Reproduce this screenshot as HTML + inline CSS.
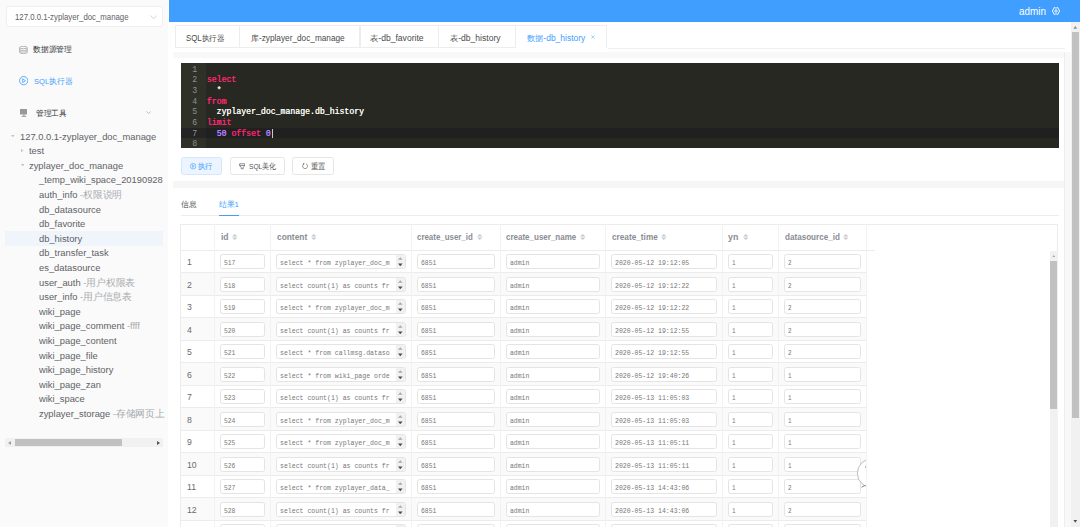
<!DOCTYPE html>
<html><head><meta charset="utf-8">
<style>
*{box-sizing:border-box;margin:0;padding:0}
html,body{width:1080px;height:527px;overflow:hidden;background:#fff;font-family:"Liberation Sans",sans-serif;color:#606266}
.a{position:absolute}
.t{position:absolute;white-space:pre;line-height:1;transform-origin:0 0}
</style></head><body>
<div class="a" style="left:0;top:0;width:168px;height:527px;background:#fafafa"></div>
<div class="a" style="left:5.8px;top:6px;width:156.8px;height:21px;background:#fff;border:1px solid #efefef;border-radius:3px"></div>
<div class="t" id="x0" style="transform:scaleX(0.9167);left:15.30px;top:12.72px;font-size:8.5px;color:#606266;">127.0.0.1-zyplayer_doc_manage</div>
<svg class="a" style="left:149.6px;top:14.6px" width="7.4" height="4.6" viewBox="0 0 8 5"><path d="M0.5 0.5 L4 4 L7.5 0.5" fill="none" stroke="#c0c4cc" stroke-width="0.8"/></svg>
<svg class="a" style="left:19.2px;top:45.8px" width="8.8" height="8.2" viewBox="0 0 9 8.4"><g fill="none" stroke="#a8a8a8" stroke-width="0.85"><ellipse cx="4.5" cy="1.6" rx="3.9" ry="1.2"/><path d="M0.6 1.6 V6.6 C0.6 8.2 8.4 8.2 8.4 6.6 V1.6"/><path d="M0.6 3.4 C0.6 5 8.4 5 8.4 3.4"/><path d="M0.6 5 C0.6 6.6 8.4 6.6 8.4 5"/></g></svg>
<div class="t" id="x1" style="transform:scaleX(0.9725);left:33.20px;top:46.21px;font-size:7.8px;color:#303133;">数据源管理</div>
<svg class="a" style="left:19px;top:76.3px" width="9.4" height="9.4" viewBox="0 0 10 10"><circle cx="5" cy="5" r="4.4" fill="none" stroke="#409eff" stroke-width="0.9"/><path d="M3.9 3 L6.9 5 L3.9 7 Z" fill="none" stroke="#409eff" stroke-width="0.85"/></svg>
<div class="t" id="x2" style="transform:scaleX(0.9695);left:33.60px;top:77.61px;font-size:7.8px;color:#409eff;">SQL执行器</div>
<svg class="a" style="left:19.6px;top:109.3px" width="7.8" height="7.8" viewBox="0 0 8 8"><rect x="0" y="0" width="8" height="5.6" fill="#999"/><rect x="3.2" y="5.6" width="1.6" height="1.4" fill="#999"/><rect x="1.6" y="7" width="4.8" height="1" fill="#999"/></svg>
<div class="t" id="x3" style="transform:scaleX(0.9625);left:36.00px;top:109.71px;font-size:7.8px;color:#303133;">管理工具</div>
<svg class="a" style="left:146px;top:110.6px" width="5.4" height="3.4" viewBox="0 0 6 4"><path d="M0.4 0.4 L3 3 L5.6 0.4" fill="none" stroke="#a0a0a0" stroke-width="0.8"/></svg>
<svg class="a" style="left:11.10px;top:134.50px" width="3.6" height="2.4" viewBox="0 0 3.6 2.4"><path d="M0 0 H3.6 L1.8 2.4 Z" fill="#c0c4cc"/></svg>
<div class="t" id="x4" style="transform:scaleX(0.9750);left:19.60px;top:131.59px;font-size:9.6px;color:#606266;">127.0.0.1-zyplayer_doc_manage</div>
<svg class="a" style="left:21.40px;top:148.80px" width="2.6" height="3.2" viewBox="0 0 2.6 3.2"><path d="M0 0 V3.2 L2.6 1.6 Z" fill="#c0c4cc"/></svg>
<div class="t" id="x5" style="transform:scaleX(0.9750);left:29.40px;top:146.19px;font-size:9.6px;color:#606266;">test</div>
<svg class="a" style="left:20.90px;top:163.70px" width="3.6" height="2.4" viewBox="0 0 3.6 2.4"><path d="M0 0 H3.6 L1.8 2.4 Z" fill="#c0c4cc"/></svg>
<div class="t" id="x6" style="transform:scaleX(0.9750);left:29.40px;top:160.79px;font-size:9.6px;color:#606266;">zyplayer_doc_manage</div>
<div class="t" id="x7" style="transform:scaleX(0.9750);left:39.20px;top:175.39px;font-size:9.6px;color:#606266;">_temp_wiki_space_20190928</div>
<div class="t" id="x8" style="transform:scaleX(0.9750);left:39.20px;top:189.99px;font-size:9.6px;color:#606266;">auth_info<span style="color:#a8aaae;font-size:9.6px"> -权限说明</span></div>
<div class="t" id="x9" style="transform:scaleX(0.9750);left:39.20px;top:204.59px;font-size:9.6px;color:#606266;">db_datasource</div>
<div class="t" id="x10" style="transform:scaleX(0.9750);left:39.20px;top:219.19px;font-size:9.6px;color:#606266;">db_favorite</div>
<div class="a" style="left:5.3px;top:231.40px;width:157.7px;height:15px;background:#f0f5fc"></div>
<div class="t" id="x11" style="transform:scaleX(0.9750);left:39.20px;top:233.79px;font-size:9.6px;color:#606266;">db_history</div>
<div class="t" id="x12" style="transform:scaleX(0.9750);left:39.20px;top:248.39px;font-size:9.6px;color:#606266;">db_transfer_task</div>
<div class="t" id="x13" style="transform:scaleX(0.9750);left:39.20px;top:262.99px;font-size:9.6px;color:#606266;">es_datasource</div>
<div class="t" id="x14" style="transform:scaleX(0.9750);left:39.20px;top:277.59px;font-size:9.6px;color:#606266;">user_auth<span style="color:#a8aaae;font-size:9.6px"> -用户权限表</span></div>
<div class="t" id="x15" style="transform:scaleX(0.9750);left:39.20px;top:292.19px;font-size:9.6px;color:#606266;">user_info<span style="color:#a8aaae;font-size:9.6px"> -用户信息表</span></div>
<div class="t" id="x16" style="transform:scaleX(0.9750);left:39.20px;top:306.79px;font-size:9.6px;color:#606266;">wiki_page</div>
<div class="t" id="x17" style="transform:scaleX(0.9750);left:39.20px;top:321.39px;font-size:9.6px;color:#606266;">wiki_page_comment<span style="color:#a8aaae;font-size:9.6px"> -ffff</span></div>
<div class="t" id="x18" style="transform:scaleX(0.9750);left:39.20px;top:335.99px;font-size:9.6px;color:#606266;">wiki_page_content</div>
<div class="t" id="x19" style="transform:scaleX(0.9750);left:39.20px;top:350.59px;font-size:9.6px;color:#606266;">wiki_page_file</div>
<div class="t" id="x20" style="transform:scaleX(0.9750);left:39.20px;top:365.19px;font-size:9.6px;color:#606266;">wiki_page_history</div>
<div class="t" id="x21" style="transform:scaleX(0.9750);left:39.20px;top:379.79px;font-size:9.6px;color:#606266;">wiki_page_zan</div>
<div class="t" id="x22" style="transform:scaleX(0.9750);left:39.20px;top:394.39px;font-size:9.6px;color:#606266;">wiki_space</div>
<div class="t" id="x23" style="transform:scaleX(0.9750);left:39.20px;top:408.99px;font-size:9.6px;color:#606266;">zyplayer_storage<span style="color:#a8aaae;font-size:9.6px"> -存储网页上</span></div>
<div class="a" style="left:5.3px;top:438.2px;width:157.7px;height:8.7px;background:#f1f1f1"></div>
<div class="a" style="left:14.8px;top:439.3px;width:107.5px;height:6.6px;background:#c1c1c1"></div>
<svg class="a" style="left:8px;top:440.6px" width="3" height="4" viewBox="0 0 3 4"><path d="M3 0 V4 L0 2 Z" fill="#a3a3a3"/></svg>
<svg class="a" style="left:157.4px;top:440.6px" width="3" height="4" viewBox="0 0 3 4"><path d="M0 0 V4 L3 2 Z" fill="#505050"/></svg>
<div class="a" style="left:168.8px;top:0;width:912px;height:22.2px;background:#409eff"></div>
<div class="t" id="x24" style="transform:scaleX(0.9356);left:1018.90px;top:5.84px;font-size:10.6px;color:#fff;">admin</div>
<svg class="a" style="left:1052px;top:6.8px" width="8" height="8" viewBox="0 0 8 8"><path d="M6.55 2.53 L6.92 3.12 L7.62 3.23 L7.62 4.77 L6.92 4.88 L6.55 5.47 L6.22 6.09 L6.48 6.75 L5.14 7.52 L4.70 6.97 L4.00 6.95 L3.30 6.97 L2.86 7.52 L1.52 6.75 L1.78 6.09 L1.45 5.47 L1.08 4.88 L0.38 4.77 L0.38 3.23 L1.08 3.12 L1.45 2.53 L1.78 1.91 L1.52 1.25 L2.86 0.48 L3.30 1.03 L4.00 1.05 L4.70 1.03 L5.14 0.48 L6.48 1.25 L6.22 1.91 Z" fill="none" stroke="#fff" stroke-width="1" stroke-linejoin="round"/><circle cx="4" cy="4" r="1.2" fill="none" stroke="#fff" stroke-width="0.9"/></svg>
<div class="a" style="left:173px;top:52.2px;width:892px;height:6px;background:#f8f8f8"></div>
<div class="a" style="left:173px;top:180.8px;width:892px;height:7px;background:#f6f6f6"></div>
<div class="a" style="left:1064px;top:52.2px;width:6.5px;height:475px;background:#f8f8f8"></div>
<div class="a" style="left:1064px;top:52.2px;width:1px;height:475px;background:#eeeeee"></div>
<div class="a" style="left:174.5px;top:25.3px;width:65.80px;height:23.2px;border:1px solid #ededed;background:#fff"></div>
<div class="t" id="x25" style="transform:scaleX(0.9431);left:186.40px;top:33.69px;font-size:8.3px;color:#4a4a4a;">SQL执行器</div>
<div class="a" style="left:239.3px;top:25.3px;width:121.20px;height:23.2px;border:1px solid #ededed;background:#fff"></div>
<div class="t" id="x26" style="transform:scaleX(0.9942);left:250.70px;top:33.69px;font-size:8.3px;color:#4a4a4a;">库-zyplayer_doc_manage</div>
<div class="a" style="left:359.5px;top:25.3px;width:79.70px;height:23.2px;border:1px solid #ededed;background:#fff"></div>
<div class="t" id="x27" style="transform:scaleX(1.0342);left:370.40px;top:33.69px;font-size:8.3px;color:#4a4a4a;">表-db_favorite</div>
<div class="a" style="left:438.2px;top:25.3px;width:77.70px;height:23.2px;border:1px solid #ededed;background:#fff"></div>
<div class="t" id="x28" style="transform:scaleX(1.0296);left:450.00px;top:33.69px;font-size:8.3px;color:#4a4a4a;">表-db_history</div>
<div class="a" style="left:514.9px;top:25.3px;width:92.6px;height:23.2px;border:1px solid #ededed;border-bottom:none;background:#fff"></div>
<div class="t" id="x29" style="transform:scaleX(1.0220);left:526.50px;top:33.69px;font-size:8.3px;color:#409eff;">数据-db_history</div>
<svg class="a" style="left:591px;top:35.2px" width="4" height="4" viewBox="0 0 4 4"><path d="M0.3 0.3 L3.7 3.7 M3.7 0.3 L0.3 3.7" stroke="#8cc3fa" stroke-width="0.75"/></svg>
<div class="a" style="left:607.5px;top:47.5px;width:457.3px;height:1px;background:#f0f0f0"></div>
<div class="a" style="left:174.5px;top:57.8px;width:889.5px;height:123px;background:#fff"></div>
<div class="a" style="left:180.8px;top:63.1px;width:878px;height:84.9px;background:#272822;overflow:hidden">
<div class="a" style="left:0;top:0;width:25.5px;height:85px;background:#2f3129"></div><div class="a" style="left:0;top:64.5px;width:25.5px;height:10.7px;background:#242424"></div>
<div class="a" style="left:25.5px;top:64.5px;width:855px;height:10.7px;background:#202020"></div>
<div class="t" style="left:11.5px;top:2.46px;font-family:'Liberation Mono',monospace;font-size:8.2px;color:#8f908a">1</div>
<div class="t" style="left:11.5px;top:13.14px;font-family:'Liberation Mono',monospace;font-size:8.2px;color:#8f908a">2</div>
<div class="t" style="left:26px;top:13.14px;font-family:'Liberation Mono',monospace;font-size:8.2px;color:#f8f8f2;text-shadow:0.12px 0 0 currentColor"><span style="color:#f92672">select</span></div>
<div class="t" style="left:11.5px;top:23.82px;font-family:'Liberation Mono',monospace;font-size:8.2px;color:#8f908a">3</div>
<div class="t" style="left:26px;top:23.82px;font-family:'Liberation Mono',monospace;font-size:8.2px;color:#f8f8f2;text-shadow:0.12px 0 0 currentColor">  *</div>
<div class="t" style="left:11.5px;top:34.50px;font-family:'Liberation Mono',monospace;font-size:8.2px;color:#8f908a">4</div>
<div class="t" style="left:26px;top:34.50px;font-family:'Liberation Mono',monospace;font-size:8.2px;color:#f8f8f2;text-shadow:0.12px 0 0 currentColor"><span style="color:#f92672">from</span></div>
<div class="t" style="left:11.5px;top:45.18px;font-family:'Liberation Mono',monospace;font-size:8.2px;color:#8f908a">5</div>
<div class="t" style="left:26px;top:45.18px;font-family:'Liberation Mono',monospace;font-size:8.2px;color:#f8f8f2;text-shadow:0.12px 0 0 currentColor">  zyplayer_doc_manage.db_history</div>
<div class="t" style="left:11.5px;top:55.86px;font-family:'Liberation Mono',monospace;font-size:8.2px;color:#8f908a">6</div>
<div class="t" style="left:26px;top:55.86px;font-family:'Liberation Mono',monospace;font-size:8.2px;color:#f8f8f2;text-shadow:0.12px 0 0 currentColor"><span style="color:#f92672">limit</span></div>
<div class="t" style="left:11.5px;top:66.54px;font-family:'Liberation Mono',monospace;font-size:8.2px;color:#8f908a">7</div>
<div class="t" style="left:26px;top:66.54px;font-family:'Liberation Mono',monospace;font-size:8.2px;color:#f8f8f2;text-shadow:0.12px 0 0 currentColor">  <span style="color:#ae81ff">50</span> <span style="color:#f92672">offset</span> <span style="color:#ae81ff">0</span></div>
<div class="t" style="left:11.5px;top:77.22px;font-family:'Liberation Mono',monospace;font-size:8.2px;color:#8f908a">8</div>
<div class="a" style="left:90.8px;top:65.8px;width:0.8px;height:9px;background:#c8c8c0"></div>
</div>
<div class="a" style="left:180.5px;top:157.3px;width:41.3px;height:18.2px;border:1px solid #d4e8fd;border-radius:2.5px;background:#ecf5ff"></div>
<svg class="a" style="left:190px;top:163.2px" width="6.4" height="6.4" viewBox="0 0 10 10"><circle cx="5" cy="5" r="4.3" fill="none" stroke="#409eff" stroke-width="1"/><path d="M4 3 L6.8 5 L4 7 Z" fill="none" stroke="#409eff" stroke-width="0.9"/></svg>
<div class="t" id="x30" style="transform:scaleX(0.9125);left:198.40px;top:163.09px;font-size:7.7px;color:#409eff;">执行</div>
<div class="a" style="left:230.1px;top:157.3px;width:54.7px;height:18.2px;border:1px solid #e6e6e6;border-radius:2.5px;background:#fff"></div>
<svg class="a" style="left:238.8px;top:163px" width="6.4" height="6.6" viewBox="0 0 10 10"><path d="M1 1 H9 V4.2 L6.6 6.4 V9 H3.4 V6.4 L1 4.2 Z M1 3.8 H9" fill="none" stroke="#606266" stroke-width="1.1"/></svg>
<div class="t" id="x31" style="transform:scaleX(0.8665);left:248.80px;top:163.09px;font-size:7.7px;color:#555;">SQL美化</div>
<div class="a" style="left:292.3px;top:157.3px;width:41.3px;height:18.2px;border:1px solid #e6e6e6;border-radius:2.5px;background:#fff"></div>
<svg class="a" style="left:301.8px;top:163px" width="6.2" height="6.2" viewBox="0 0 10 10"><path d="M3 1.6 A4 4 0 1 0 6.6 1.4" fill="none" stroke="#606266" stroke-width="1.1"/><path d="M1.2 0.4 L4.4 0.8 L2.4 3.4 Z" fill="#606266"/></svg>
<div class="t" id="x32" style="transform:scaleX(0.9125);left:311.00px;top:163.09px;font-size:7.7px;color:#555;">重置</div>
<div class="a" style="left:174.5px;top:187.8px;width:889.5px;height:340px;background:#fff"></div>
<div class="t" id="x33" style="transform:scaleX(0.9688);left:180.60px;top:201.04px;font-size:8px;color:#4a4a4a;">信息</div>
<div class="t" id="x34" style="transform:scaleX(0.9730);left:218.90px;top:201.04px;font-size:8px;color:#409eff;">结果1</div>
<div class="a" style="left:180.6px;top:215px;width:878px;height:1px;background:#ededed"></div>
<div class="a" style="left:219px;top:214.5px;width:19.8px;height:1.4px;background:#409eff"></div>
<div class="a" style="left:180.3px;top:224.3px;width:878.2px;height:303px;border:1px solid #ececec;border-bottom:none"></div>
<div class="a" style="left:180.3px;top:249.90px;width:695.20px;height:1px;background:#ececec"></div>
<div class="a" style="left:181px;top:272.90px;width:685.30px;height:22.50px;background:#fafafa"></div>
<div class="a" style="left:180.3px;top:272.40px;width:686.00px;height:1px;background:#ececec"></div>
<div class="a" style="left:180.3px;top:294.90px;width:686.00px;height:1px;background:#ececec"></div>
<div class="a" style="left:181px;top:317.90px;width:685.30px;height:22.50px;background:#fafafa"></div>
<div class="a" style="left:180.3px;top:317.40px;width:686.00px;height:1px;background:#ececec"></div>
<div class="a" style="left:180.3px;top:339.90px;width:686.00px;height:1px;background:#ececec"></div>
<div class="a" style="left:181px;top:362.90px;width:685.30px;height:22.50px;background:#fafafa"></div>
<div class="a" style="left:180.3px;top:362.40px;width:686.00px;height:1px;background:#ececec"></div>
<div class="a" style="left:180.3px;top:384.90px;width:686.00px;height:1px;background:#ececec"></div>
<div class="a" style="left:181px;top:407.90px;width:685.30px;height:22.50px;background:#fafafa"></div>
<div class="a" style="left:180.3px;top:407.40px;width:686.00px;height:1px;background:#ececec"></div>
<div class="a" style="left:180.3px;top:429.90px;width:686.00px;height:1px;background:#ececec"></div>
<div class="a" style="left:181px;top:452.90px;width:685.30px;height:22.50px;background:#fafafa"></div>
<div class="a" style="left:180.3px;top:452.40px;width:686.00px;height:1px;background:#ececec"></div>
<div class="a" style="left:180.3px;top:474.90px;width:686.00px;height:1px;background:#ececec"></div>
<div class="a" style="left:181px;top:497.90px;width:685.30px;height:22.50px;background:#fafafa"></div>
<div class="a" style="left:180.3px;top:497.40px;width:686.00px;height:1px;background:#ececec"></div>
<div class="a" style="left:180.3px;top:519.90px;width:686.00px;height:1px;background:#ececec"></div>
<div class="a" style="left:213.90px;top:224.30px;width:1px;height:302.70px;background:#f2f2f2"></div>
<div class="a" style="left:269.90px;top:224.30px;width:1px;height:302.70px;background:#f2f2f2"></div>
<div class="a" style="left:411.10px;top:224.30px;width:1px;height:302.70px;background:#f2f2f2"></div>
<div class="a" style="left:500.20px;top:224.30px;width:1px;height:302.70px;background:#f2f2f2"></div>
<div class="a" style="left:605.20px;top:224.30px;width:1px;height:302.70px;background:#f2f2f2"></div>
<div class="a" style="left:722.10px;top:224.30px;width:1px;height:302.70px;background:#f2f2f2"></div>
<div class="a" style="left:777.90px;top:224.30px;width:1px;height:302.70px;background:#f2f2f2"></div>
<div class="a" style="left:865.80px;top:224.30px;width:1px;height:302.70px;background:#f2f2f2"></div>
<div class="t" id="x35" style="transform:scaleX(0.9300);left:220.60px;top:232.73px;font-size:9.2px;color:#8a8d93;font-weight:bold;">id</div>
<svg class="a" style="left:232.10px;top:233.5px" width="5.6" height="6" viewBox="0 0 5.6 6"><path d="M0.1 2.6 L2.8 0 L5.5 2.6 Z M0.1 3.4 L2.8 6 L5.5 3.4 Z" fill="#c8cacf"/></svg>
<div class="t" id="x36" style="transform:scaleX(0.9100);left:276.80px;top:232.73px;font-size:9.2px;color:#8a8d93;font-weight:bold;">content</div>
<svg class="a" style="left:310.90px;top:233.5px" width="5.6" height="6" viewBox="0 0 5.6 6"><path d="M0.1 2.6 L2.8 0 L5.5 2.6 Z M0.1 3.4 L2.8 6 L5.5 3.4 Z" fill="#c8cacf"/></svg>
<div class="t" id="x37" style="transform:scaleX(0.8601);left:417.40px;top:232.73px;font-size:9.2px;color:#8a8d93;font-weight:bold;">create_user_id</div>
<svg class="a" style="left:477.10px;top:233.5px" width="5.6" height="6" viewBox="0 0 5.6 6"><path d="M0.1 2.6 L2.8 0 L5.5 2.6 Z M0.1 3.4 L2.8 6 L5.5 3.4 Z" fill="#c8cacf"/></svg>
<div class="t" id="x38" style="transform:scaleX(0.8699);left:506.30px;top:232.73px;font-size:9.2px;color:#8a8d93;font-weight:bold;">create_user_name</div>
<svg class="a" style="left:580.40px;top:233.5px" width="5.6" height="6" viewBox="0 0 5.6 6"><path d="M0.1 2.6 L2.8 0 L5.5 2.6 Z M0.1 3.4 L2.8 6 L5.5 3.4 Z" fill="#c8cacf"/></svg>
<div class="t" id="x39" style="transform:scaleX(0.8967);left:611.70px;top:232.73px;font-size:9.2px;color:#8a8d93;font-weight:bold;">create_time</div>
<svg class="a" style="left:661.40px;top:233.5px" width="5.6" height="6" viewBox="0 0 5.6 6"><path d="M0.1 2.6 L2.8 0 L5.5 2.6 Z M0.1 3.4 L2.8 6 L5.5 3.4 Z" fill="#c8cacf"/></svg>
<div class="t" id="x40" style="transform:scaleX(0.9595);left:728.30px;top:232.73px;font-size:9.2px;color:#8a8d93;font-weight:bold;">yn</div>
<svg class="a" style="left:742.50px;top:233.5px" width="5.6" height="6" viewBox="0 0 5.6 6"><path d="M0.1 2.6 L2.8 0 L5.5 2.6 Z M0.1 3.4 L2.8 6 L5.5 3.4 Z" fill="#c8cacf"/></svg>
<div class="t" id="x41" style="transform:scaleX(0.8813);left:784.60px;top:232.73px;font-size:9.2px;color:#8a8d93;font-weight:bold;">datasource_id</div>
<svg class="a" style="left:843.40px;top:233.5px" width="5.6" height="6" viewBox="0 0 5.6 6"><path d="M0.1 2.6 L2.8 0 L5.5 2.6 Z M0.1 3.4 L2.8 6 L5.5 3.4 Z" fill="#c8cacf"/></svg>
<div class="t" id="x42" style="transform:scaleX(0.9300);left:187.30px;top:257.16px;font-size:9.4px;color:#6a6a6a;">1</div>
<div class="a" style="left:220.10px;top:254.20px;width:44.60px;height:15.2px;border:1px solid #e4e4e4;border-radius:2.5px;background:#fff;overflow:hidden"></div>
<div class="t" id="x43" style="transform:scaleX(0.7813);left:223.70px;top:259.36px;font-size:8.1px;color:#777;font-family:'Liberation Mono',monospace;">517</div>
<div class="a" style="left:276.10px;top:254.20px;width:129.80px;height:15.2px;border:1px solid #e4e4e4;border-radius:2.5px;background:#fff;overflow:hidden"></div>
<div class="a" style="left:396.10px;top:255.20px;width:8.8px;height:13.2px;background:#f1f1f1"></div>
<svg class="a" style="left:398.20px;top:257.40px" width="4.6" height="9.4" viewBox="0 0 4.6 9.4"><path d="M0 2.8 L2.3 0.2 L4.6 2.8 Z" fill="#a8a8a8"/><path d="M0 6.6 L2.3 9.2 L4.6 6.6 Z" fill="#4a4a4a"/></svg>
<div class="t" id="x44" style="transform:scaleX(0.8062);left:279.70px;top:259.36px;font-size:8.1px;color:#777;font-family:'Liberation Mono',monospace;">select * from zyplayer_doc_m</div>
<div class="a" style="left:417.30px;top:254.20px;width:77.70px;height:15.2px;border:1px solid #e4e4e4;border-radius:2.5px;background:#fff;overflow:hidden"></div>
<div class="t" id="x45" style="transform:scaleX(0.7882);left:420.90px;top:259.36px;font-size:8.1px;color:#777;font-family:'Liberation Mono',monospace;">6851</div>
<div class="a" style="left:506.40px;top:254.20px;width:93.60px;height:15.2px;border:1px solid #e4e4e4;border-radius:2.5px;background:#fff;overflow:hidden"></div>
<div class="t" id="x46" style="transform:scaleX(0.7923);left:510.00px;top:259.36px;font-size:8.1px;color:#777;font-family:'Liberation Mono',monospace;">admin</div>
<div class="a" style="left:611.40px;top:254.20px;width:105.50px;height:15.2px;border:1px solid #e4e4e4;border-radius:2.5px;background:#fff;overflow:hidden"></div>
<div class="t" id="x47" style="transform:scaleX(0.8047);left:615.00px;top:259.36px;font-size:8.1px;color:#777;font-family:'Liberation Mono',monospace;">2020-05-12 19:12:05</div>
<div class="a" style="left:728.30px;top:254.20px;width:44.40px;height:15.2px;border:1px solid #e4e4e4;border-radius:2.5px;background:#fff;overflow:hidden"></div>
<div class="t" id="x48" style="transform:scaleX(0.7264);left:731.90px;top:259.36px;font-size:8.1px;color:#777;font-family:'Liberation Mono',monospace;">1</div>
<div class="a" style="left:784.10px;top:254.20px;width:76.50px;height:15.2px;border:1px solid #e4e4e4;border-radius:2.5px;background:#fff;overflow:hidden"></div>
<div class="t" id="x49" style="transform:scaleX(0.7264);left:787.70px;top:259.36px;font-size:8.1px;color:#777;font-family:'Liberation Mono',monospace;">2</div>
<div class="t" id="x50" style="transform:scaleX(0.9300);left:187.30px;top:279.66px;font-size:9.4px;color:#6a6a6a;">2</div>
<div class="a" style="left:220.10px;top:276.70px;width:44.60px;height:15.2px;border:1px solid #e4e4e4;border-radius:2.5px;background:#fff;overflow:hidden"></div>
<div class="t" id="x51" style="transform:scaleX(0.7813);left:223.70px;top:281.86px;font-size:8.1px;color:#777;font-family:'Liberation Mono',monospace;">518</div>
<div class="a" style="left:276.10px;top:276.70px;width:129.80px;height:15.2px;border:1px solid #e4e4e4;border-radius:2.5px;background:#fff;overflow:hidden"></div>
<div class="a" style="left:396.10px;top:277.70px;width:8.8px;height:13.2px;background:#f1f1f1"></div>
<svg class="a" style="left:398.20px;top:279.90px" width="4.6" height="9.4" viewBox="0 0 4.6 9.4"><path d="M0 2.8 L2.3 0.2 L4.6 2.8 Z" fill="#a8a8a8"/><path d="M0 6.6 L2.3 9.2 L4.6 6.6 Z" fill="#4a4a4a"/></svg>
<div class="t" id="x52" style="transform:scaleX(0.8062);left:279.70px;top:281.86px;font-size:8.1px;color:#777;font-family:'Liberation Mono',monospace;">select count(1) as counts fr</div>
<div class="a" style="left:417.30px;top:276.70px;width:77.70px;height:15.2px;border:1px solid #e4e4e4;border-radius:2.5px;background:#fff;overflow:hidden"></div>
<div class="t" id="x53" style="transform:scaleX(0.7882);left:420.90px;top:281.86px;font-size:8.1px;color:#777;font-family:'Liberation Mono',monospace;">6851</div>
<div class="a" style="left:506.40px;top:276.70px;width:93.60px;height:15.2px;border:1px solid #e4e4e4;border-radius:2.5px;background:#fff;overflow:hidden"></div>
<div class="t" id="x54" style="transform:scaleX(0.7923);left:510.00px;top:281.86px;font-size:8.1px;color:#777;font-family:'Liberation Mono',monospace;">admin</div>
<div class="a" style="left:611.40px;top:276.70px;width:105.50px;height:15.2px;border:1px solid #e4e4e4;border-radius:2.5px;background:#fff;overflow:hidden"></div>
<div class="t" id="x55" style="transform:scaleX(0.8047);left:615.00px;top:281.86px;font-size:8.1px;color:#777;font-family:'Liberation Mono',monospace;">2020-05-12 19:12:22</div>
<div class="a" style="left:728.30px;top:276.70px;width:44.40px;height:15.2px;border:1px solid #e4e4e4;border-radius:2.5px;background:#fff;overflow:hidden"></div>
<div class="t" id="x56" style="transform:scaleX(0.7264);left:731.90px;top:281.86px;font-size:8.1px;color:#777;font-family:'Liberation Mono',monospace;">1</div>
<div class="a" style="left:784.10px;top:276.70px;width:76.50px;height:15.2px;border:1px solid #e4e4e4;border-radius:2.5px;background:#fff;overflow:hidden"></div>
<div class="t" id="x57" style="transform:scaleX(0.7264);left:787.70px;top:281.86px;font-size:8.1px;color:#777;font-family:'Liberation Mono',monospace;">2</div>
<div class="t" id="x58" style="transform:scaleX(0.9300);left:187.30px;top:302.16px;font-size:9.4px;color:#6a6a6a;">3</div>
<div class="a" style="left:220.10px;top:299.20px;width:44.60px;height:15.2px;border:1px solid #e4e4e4;border-radius:2.5px;background:#fff;overflow:hidden"></div>
<div class="t" id="x59" style="transform:scaleX(0.7813);left:223.70px;top:304.36px;font-size:8.1px;color:#777;font-family:'Liberation Mono',monospace;">519</div>
<div class="a" style="left:276.10px;top:299.20px;width:129.80px;height:15.2px;border:1px solid #e4e4e4;border-radius:2.5px;background:#fff;overflow:hidden"></div>
<div class="a" style="left:396.10px;top:300.20px;width:8.8px;height:13.2px;background:#f1f1f1"></div>
<svg class="a" style="left:398.20px;top:302.40px" width="4.6" height="9.4" viewBox="0 0 4.6 9.4"><path d="M0 2.8 L2.3 0.2 L4.6 2.8 Z" fill="#a8a8a8"/><path d="M0 6.6 L2.3 9.2 L4.6 6.6 Z" fill="#4a4a4a"/></svg>
<div class="t" id="x60" style="transform:scaleX(0.8062);left:279.70px;top:304.36px;font-size:8.1px;color:#777;font-family:'Liberation Mono',monospace;">select * from zyplayer_doc_m</div>
<div class="a" style="left:417.30px;top:299.20px;width:77.70px;height:15.2px;border:1px solid #e4e4e4;border-radius:2.5px;background:#fff;overflow:hidden"></div>
<div class="t" id="x61" style="transform:scaleX(0.7882);left:420.90px;top:304.36px;font-size:8.1px;color:#777;font-family:'Liberation Mono',monospace;">6851</div>
<div class="a" style="left:506.40px;top:299.20px;width:93.60px;height:15.2px;border:1px solid #e4e4e4;border-radius:2.5px;background:#fff;overflow:hidden"></div>
<div class="t" id="x62" style="transform:scaleX(0.7923);left:510.00px;top:304.36px;font-size:8.1px;color:#777;font-family:'Liberation Mono',monospace;">admin</div>
<div class="a" style="left:611.40px;top:299.20px;width:105.50px;height:15.2px;border:1px solid #e4e4e4;border-radius:2.5px;background:#fff;overflow:hidden"></div>
<div class="t" id="x63" style="transform:scaleX(0.8047);left:615.00px;top:304.36px;font-size:8.1px;color:#777;font-family:'Liberation Mono',monospace;">2020-05-12 19:12:22</div>
<div class="a" style="left:728.30px;top:299.20px;width:44.40px;height:15.2px;border:1px solid #e4e4e4;border-radius:2.5px;background:#fff;overflow:hidden"></div>
<div class="t" id="x64" style="transform:scaleX(0.7264);left:731.90px;top:304.36px;font-size:8.1px;color:#777;font-family:'Liberation Mono',monospace;">1</div>
<div class="a" style="left:784.10px;top:299.20px;width:76.50px;height:15.2px;border:1px solid #e4e4e4;border-radius:2.5px;background:#fff;overflow:hidden"></div>
<div class="t" id="x65" style="transform:scaleX(0.7264);left:787.70px;top:304.36px;font-size:8.1px;color:#777;font-family:'Liberation Mono',monospace;">2</div>
<div class="t" id="x66" style="transform:scaleX(0.9300);left:187.30px;top:324.66px;font-size:9.4px;color:#6a6a6a;">4</div>
<div class="a" style="left:220.10px;top:321.70px;width:44.60px;height:15.2px;border:1px solid #e4e4e4;border-radius:2.5px;background:#fff;overflow:hidden"></div>
<div class="t" id="x67" style="transform:scaleX(0.7813);left:223.70px;top:326.86px;font-size:8.1px;color:#777;font-family:'Liberation Mono',monospace;">520</div>
<div class="a" style="left:276.10px;top:321.70px;width:129.80px;height:15.2px;border:1px solid #e4e4e4;border-radius:2.5px;background:#fff;overflow:hidden"></div>
<div class="a" style="left:396.10px;top:322.70px;width:8.8px;height:13.2px;background:#f1f1f1"></div>
<svg class="a" style="left:398.20px;top:324.90px" width="4.6" height="9.4" viewBox="0 0 4.6 9.4"><path d="M0 2.8 L2.3 0.2 L4.6 2.8 Z" fill="#a8a8a8"/><path d="M0 6.6 L2.3 9.2 L4.6 6.6 Z" fill="#4a4a4a"/></svg>
<div class="t" id="x68" style="transform:scaleX(0.8062);left:279.70px;top:326.86px;font-size:8.1px;color:#777;font-family:'Liberation Mono',monospace;">select count(1) as counts fr</div>
<div class="a" style="left:417.30px;top:321.70px;width:77.70px;height:15.2px;border:1px solid #e4e4e4;border-radius:2.5px;background:#fff;overflow:hidden"></div>
<div class="t" id="x69" style="transform:scaleX(0.7882);left:420.90px;top:326.86px;font-size:8.1px;color:#777;font-family:'Liberation Mono',monospace;">6851</div>
<div class="a" style="left:506.40px;top:321.70px;width:93.60px;height:15.2px;border:1px solid #e4e4e4;border-radius:2.5px;background:#fff;overflow:hidden"></div>
<div class="t" id="x70" style="transform:scaleX(0.7923);left:510.00px;top:326.86px;font-size:8.1px;color:#777;font-family:'Liberation Mono',monospace;">admin</div>
<div class="a" style="left:611.40px;top:321.70px;width:105.50px;height:15.2px;border:1px solid #e4e4e4;border-radius:2.5px;background:#fff;overflow:hidden"></div>
<div class="t" id="x71" style="transform:scaleX(0.8047);left:615.00px;top:326.86px;font-size:8.1px;color:#777;font-family:'Liberation Mono',monospace;">2020-05-12 19:12:55</div>
<div class="a" style="left:728.30px;top:321.70px;width:44.40px;height:15.2px;border:1px solid #e4e4e4;border-radius:2.5px;background:#fff;overflow:hidden"></div>
<div class="t" id="x72" style="transform:scaleX(0.7264);left:731.90px;top:326.86px;font-size:8.1px;color:#777;font-family:'Liberation Mono',monospace;">1</div>
<div class="a" style="left:784.10px;top:321.70px;width:76.50px;height:15.2px;border:1px solid #e4e4e4;border-radius:2.5px;background:#fff;overflow:hidden"></div>
<div class="t" id="x73" style="transform:scaleX(0.7264);left:787.70px;top:326.86px;font-size:8.1px;color:#777;font-family:'Liberation Mono',monospace;">2</div>
<div class="t" id="x74" style="transform:scaleX(0.9300);left:187.30px;top:347.16px;font-size:9.4px;color:#6a6a6a;">5</div>
<div class="a" style="left:220.10px;top:344.20px;width:44.60px;height:15.2px;border:1px solid #e4e4e4;border-radius:2.5px;background:#fff;overflow:hidden"></div>
<div class="t" id="x75" style="transform:scaleX(0.7813);left:223.70px;top:349.36px;font-size:8.1px;color:#777;font-family:'Liberation Mono',monospace;">521</div>
<div class="a" style="left:276.10px;top:344.20px;width:129.80px;height:15.2px;border:1px solid #e4e4e4;border-radius:2.5px;background:#fff;overflow:hidden"></div>
<div class="a" style="left:396.10px;top:345.20px;width:8.8px;height:13.2px;background:#f1f1f1"></div>
<svg class="a" style="left:398.20px;top:347.40px" width="4.6" height="9.4" viewBox="0 0 4.6 9.4"><path d="M0 2.8 L2.3 0.2 L4.6 2.8 Z" fill="#a8a8a8"/><path d="M0 6.6 L2.3 9.2 L4.6 6.6 Z" fill="#4a4a4a"/></svg>
<div class="t" id="x76" style="transform:scaleX(0.8062);left:279.70px;top:349.36px;font-size:8.1px;color:#777;font-family:'Liberation Mono',monospace;">select * from callmsg.dataso</div>
<div class="a" style="left:417.30px;top:344.20px;width:77.70px;height:15.2px;border:1px solid #e4e4e4;border-radius:2.5px;background:#fff;overflow:hidden"></div>
<div class="t" id="x77" style="transform:scaleX(0.7882);left:420.90px;top:349.36px;font-size:8.1px;color:#777;font-family:'Liberation Mono',monospace;">6851</div>
<div class="a" style="left:506.40px;top:344.20px;width:93.60px;height:15.2px;border:1px solid #e4e4e4;border-radius:2.5px;background:#fff;overflow:hidden"></div>
<div class="t" id="x78" style="transform:scaleX(0.7923);left:510.00px;top:349.36px;font-size:8.1px;color:#777;font-family:'Liberation Mono',monospace;">admin</div>
<div class="a" style="left:611.40px;top:344.20px;width:105.50px;height:15.2px;border:1px solid #e4e4e4;border-radius:2.5px;background:#fff;overflow:hidden"></div>
<div class="t" id="x79" style="transform:scaleX(0.8047);left:615.00px;top:349.36px;font-size:8.1px;color:#777;font-family:'Liberation Mono',monospace;">2020-05-12 19:12:55</div>
<div class="a" style="left:728.30px;top:344.20px;width:44.40px;height:15.2px;border:1px solid #e4e4e4;border-radius:2.5px;background:#fff;overflow:hidden"></div>
<div class="t" id="x80" style="transform:scaleX(0.7264);left:731.90px;top:349.36px;font-size:8.1px;color:#777;font-family:'Liberation Mono',monospace;">1</div>
<div class="a" style="left:784.10px;top:344.20px;width:76.50px;height:15.2px;border:1px solid #e4e4e4;border-radius:2.5px;background:#fff;overflow:hidden"></div>
<div class="t" id="x81" style="transform:scaleX(0.7264);left:787.70px;top:349.36px;font-size:8.1px;color:#777;font-family:'Liberation Mono',monospace;">2</div>
<div class="t" id="x82" style="transform:scaleX(0.9300);left:187.30px;top:369.66px;font-size:9.4px;color:#6a6a6a;">6</div>
<div class="a" style="left:220.10px;top:366.70px;width:44.60px;height:15.2px;border:1px solid #e4e4e4;border-radius:2.5px;background:#fff;overflow:hidden"></div>
<div class="t" id="x83" style="transform:scaleX(0.7813);left:223.70px;top:371.86px;font-size:8.1px;color:#777;font-family:'Liberation Mono',monospace;">522</div>
<div class="a" style="left:276.10px;top:366.70px;width:129.80px;height:15.2px;border:1px solid #e4e4e4;border-radius:2.5px;background:#fff;overflow:hidden"></div>
<div class="a" style="left:396.10px;top:367.70px;width:8.8px;height:13.2px;background:#f1f1f1"></div>
<svg class="a" style="left:398.20px;top:369.90px" width="4.6" height="9.4" viewBox="0 0 4.6 9.4"><path d="M0 2.8 L2.3 0.2 L4.6 2.8 Z" fill="#a8a8a8"/><path d="M0 6.6 L2.3 9.2 L4.6 6.6 Z" fill="#4a4a4a"/></svg>
<div class="t" id="x84" style="transform:scaleX(0.8062);left:279.70px;top:371.86px;font-size:8.1px;color:#777;font-family:'Liberation Mono',monospace;">select * from wiki_page orde</div>
<div class="a" style="left:417.30px;top:366.70px;width:77.70px;height:15.2px;border:1px solid #e4e4e4;border-radius:2.5px;background:#fff;overflow:hidden"></div>
<div class="t" id="x85" style="transform:scaleX(0.7882);left:420.90px;top:371.86px;font-size:8.1px;color:#777;font-family:'Liberation Mono',monospace;">6851</div>
<div class="a" style="left:506.40px;top:366.70px;width:93.60px;height:15.2px;border:1px solid #e4e4e4;border-radius:2.5px;background:#fff;overflow:hidden"></div>
<div class="t" id="x86" style="transform:scaleX(0.7923);left:510.00px;top:371.86px;font-size:8.1px;color:#777;font-family:'Liberation Mono',monospace;">admin</div>
<div class="a" style="left:611.40px;top:366.70px;width:105.50px;height:15.2px;border:1px solid #e4e4e4;border-radius:2.5px;background:#fff;overflow:hidden"></div>
<div class="t" id="x87" style="transform:scaleX(0.8047);left:615.00px;top:371.86px;font-size:8.1px;color:#777;font-family:'Liberation Mono',monospace;">2020-05-12 19:40:26</div>
<div class="a" style="left:728.30px;top:366.70px;width:44.40px;height:15.2px;border:1px solid #e4e4e4;border-radius:2.5px;background:#fff;overflow:hidden"></div>
<div class="t" id="x88" style="transform:scaleX(0.7264);left:731.90px;top:371.86px;font-size:8.1px;color:#777;font-family:'Liberation Mono',monospace;">1</div>
<div class="a" style="left:784.10px;top:366.70px;width:76.50px;height:15.2px;border:1px solid #e4e4e4;border-radius:2.5px;background:#fff;overflow:hidden"></div>
<div class="t" id="x89" style="transform:scaleX(0.7264);left:787.70px;top:371.86px;font-size:8.1px;color:#777;font-family:'Liberation Mono',monospace;">1</div>
<div class="t" id="x90" style="transform:scaleX(0.9300);left:187.30px;top:392.16px;font-size:9.4px;color:#6a6a6a;">7</div>
<div class="a" style="left:220.10px;top:389.20px;width:44.60px;height:15.2px;border:1px solid #e4e4e4;border-radius:2.5px;background:#fff;overflow:hidden"></div>
<div class="t" id="x91" style="transform:scaleX(0.7813);left:223.70px;top:394.36px;font-size:8.1px;color:#777;font-family:'Liberation Mono',monospace;">523</div>
<div class="a" style="left:276.10px;top:389.20px;width:129.80px;height:15.2px;border:1px solid #e4e4e4;border-radius:2.5px;background:#fff;overflow:hidden"></div>
<div class="a" style="left:396.10px;top:390.20px;width:8.8px;height:13.2px;background:#f1f1f1"></div>
<svg class="a" style="left:398.20px;top:392.40px" width="4.6" height="9.4" viewBox="0 0 4.6 9.4"><path d="M0 2.8 L2.3 0.2 L4.6 2.8 Z" fill="#a8a8a8"/><path d="M0 6.6 L2.3 9.2 L4.6 6.6 Z" fill="#4a4a4a"/></svg>
<div class="t" id="x92" style="transform:scaleX(0.8062);left:279.70px;top:394.36px;font-size:8.1px;color:#777;font-family:'Liberation Mono',monospace;">select count(1) as counts fr</div>
<div class="a" style="left:417.30px;top:389.20px;width:77.70px;height:15.2px;border:1px solid #e4e4e4;border-radius:2.5px;background:#fff;overflow:hidden"></div>
<div class="t" id="x93" style="transform:scaleX(0.7882);left:420.90px;top:394.36px;font-size:8.1px;color:#777;font-family:'Liberation Mono',monospace;">6851</div>
<div class="a" style="left:506.40px;top:389.20px;width:93.60px;height:15.2px;border:1px solid #e4e4e4;border-radius:2.5px;background:#fff;overflow:hidden"></div>
<div class="t" id="x94" style="transform:scaleX(0.7923);left:510.00px;top:394.36px;font-size:8.1px;color:#777;font-family:'Liberation Mono',monospace;">admin</div>
<div class="a" style="left:611.40px;top:389.20px;width:105.50px;height:15.2px;border:1px solid #e4e4e4;border-radius:2.5px;background:#fff;overflow:hidden"></div>
<div class="t" id="x95" style="transform:scaleX(0.8047);left:615.00px;top:394.36px;font-size:8.1px;color:#777;font-family:'Liberation Mono',monospace;">2020-05-13 11:05:03</div>
<div class="a" style="left:728.30px;top:389.20px;width:44.40px;height:15.2px;border:1px solid #e4e4e4;border-radius:2.5px;background:#fff;overflow:hidden"></div>
<div class="t" id="x96" style="transform:scaleX(0.7264);left:731.90px;top:394.36px;font-size:8.1px;color:#777;font-family:'Liberation Mono',monospace;">1</div>
<div class="a" style="left:784.10px;top:389.20px;width:76.50px;height:15.2px;border:1px solid #e4e4e4;border-radius:2.5px;background:#fff;overflow:hidden"></div>
<div class="t" id="x97" style="transform:scaleX(0.7264);left:787.70px;top:394.36px;font-size:8.1px;color:#777;font-family:'Liberation Mono',monospace;">1</div>
<div class="t" id="x98" style="transform:scaleX(0.9300);left:187.30px;top:414.66px;font-size:9.4px;color:#6a6a6a;">8</div>
<div class="a" style="left:220.10px;top:411.70px;width:44.60px;height:15.2px;border:1px solid #e4e4e4;border-radius:2.5px;background:#fff;overflow:hidden"></div>
<div class="t" id="x99" style="transform:scaleX(0.7813);left:223.70px;top:416.86px;font-size:8.1px;color:#777;font-family:'Liberation Mono',monospace;">524</div>
<div class="a" style="left:276.10px;top:411.70px;width:129.80px;height:15.2px;border:1px solid #e4e4e4;border-radius:2.5px;background:#fff;overflow:hidden"></div>
<div class="a" style="left:396.10px;top:412.70px;width:8.8px;height:13.2px;background:#f1f1f1"></div>
<svg class="a" style="left:398.20px;top:414.90px" width="4.6" height="9.4" viewBox="0 0 4.6 9.4"><path d="M0 2.8 L2.3 0.2 L4.6 2.8 Z" fill="#a8a8a8"/><path d="M0 6.6 L2.3 9.2 L4.6 6.6 Z" fill="#4a4a4a"/></svg>
<div class="t" id="x100" style="transform:scaleX(0.8062);left:279.70px;top:416.86px;font-size:8.1px;color:#777;font-family:'Liberation Mono',monospace;">select * from zyplayer_doc_m</div>
<div class="a" style="left:417.30px;top:411.70px;width:77.70px;height:15.2px;border:1px solid #e4e4e4;border-radius:2.5px;background:#fff;overflow:hidden"></div>
<div class="t" id="x101" style="transform:scaleX(0.7882);left:420.90px;top:416.86px;font-size:8.1px;color:#777;font-family:'Liberation Mono',monospace;">6851</div>
<div class="a" style="left:506.40px;top:411.70px;width:93.60px;height:15.2px;border:1px solid #e4e4e4;border-radius:2.5px;background:#fff;overflow:hidden"></div>
<div class="t" id="x102" style="transform:scaleX(0.7923);left:510.00px;top:416.86px;font-size:8.1px;color:#777;font-family:'Liberation Mono',monospace;">admin</div>
<div class="a" style="left:611.40px;top:411.70px;width:105.50px;height:15.2px;border:1px solid #e4e4e4;border-radius:2.5px;background:#fff;overflow:hidden"></div>
<div class="t" id="x103" style="transform:scaleX(0.8047);left:615.00px;top:416.86px;font-size:8.1px;color:#777;font-family:'Liberation Mono',monospace;">2020-05-13 11:05:03</div>
<div class="a" style="left:728.30px;top:411.70px;width:44.40px;height:15.2px;border:1px solid #e4e4e4;border-radius:2.5px;background:#fff;overflow:hidden"></div>
<div class="t" id="x104" style="transform:scaleX(0.7264);left:731.90px;top:416.86px;font-size:8.1px;color:#777;font-family:'Liberation Mono',monospace;">1</div>
<div class="a" style="left:784.10px;top:411.70px;width:76.50px;height:15.2px;border:1px solid #e4e4e4;border-radius:2.5px;background:#fff;overflow:hidden"></div>
<div class="t" id="x105" style="transform:scaleX(0.7264);left:787.70px;top:416.86px;font-size:8.1px;color:#777;font-family:'Liberation Mono',monospace;">1</div>
<div class="t" id="x106" style="transform:scaleX(0.9300);left:187.30px;top:437.16px;font-size:9.4px;color:#6a6a6a;">9</div>
<div class="a" style="left:220.10px;top:434.20px;width:44.60px;height:15.2px;border:1px solid #e4e4e4;border-radius:2.5px;background:#fff;overflow:hidden"></div>
<div class="t" id="x107" style="transform:scaleX(0.7813);left:223.70px;top:439.36px;font-size:8.1px;color:#777;font-family:'Liberation Mono',monospace;">525</div>
<div class="a" style="left:276.10px;top:434.20px;width:129.80px;height:15.2px;border:1px solid #e4e4e4;border-radius:2.5px;background:#fff;overflow:hidden"></div>
<div class="a" style="left:396.10px;top:435.20px;width:8.8px;height:13.2px;background:#f1f1f1"></div>
<svg class="a" style="left:398.20px;top:437.40px" width="4.6" height="9.4" viewBox="0 0 4.6 9.4"><path d="M0 2.8 L2.3 0.2 L4.6 2.8 Z" fill="#a8a8a8"/><path d="M0 6.6 L2.3 9.2 L4.6 6.6 Z" fill="#4a4a4a"/></svg>
<div class="t" id="x108" style="transform:scaleX(0.8062);left:279.70px;top:439.36px;font-size:8.1px;color:#777;font-family:'Liberation Mono',monospace;">select * from zyplayer_doc_m</div>
<div class="a" style="left:417.30px;top:434.20px;width:77.70px;height:15.2px;border:1px solid #e4e4e4;border-radius:2.5px;background:#fff;overflow:hidden"></div>
<div class="t" id="x109" style="transform:scaleX(0.7882);left:420.90px;top:439.36px;font-size:8.1px;color:#777;font-family:'Liberation Mono',monospace;">6851</div>
<div class="a" style="left:506.40px;top:434.20px;width:93.60px;height:15.2px;border:1px solid #e4e4e4;border-radius:2.5px;background:#fff;overflow:hidden"></div>
<div class="t" id="x110" style="transform:scaleX(0.7923);left:510.00px;top:439.36px;font-size:8.1px;color:#777;font-family:'Liberation Mono',monospace;">admin</div>
<div class="a" style="left:611.40px;top:434.20px;width:105.50px;height:15.2px;border:1px solid #e4e4e4;border-radius:2.5px;background:#fff;overflow:hidden"></div>
<div class="t" id="x111" style="transform:scaleX(0.8047);left:615.00px;top:439.36px;font-size:8.1px;color:#777;font-family:'Liberation Mono',monospace;">2020-05-13 11:05:11</div>
<div class="a" style="left:728.30px;top:434.20px;width:44.40px;height:15.2px;border:1px solid #e4e4e4;border-radius:2.5px;background:#fff;overflow:hidden"></div>
<div class="t" id="x112" style="transform:scaleX(0.7264);left:731.90px;top:439.36px;font-size:8.1px;color:#777;font-family:'Liberation Mono',monospace;">1</div>
<div class="a" style="left:784.10px;top:434.20px;width:76.50px;height:15.2px;border:1px solid #e4e4e4;border-radius:2.5px;background:#fff;overflow:hidden"></div>
<div class="t" id="x113" style="transform:scaleX(0.7264);left:787.70px;top:439.36px;font-size:8.1px;color:#777;font-family:'Liberation Mono',monospace;">1</div>
<div class="t" id="x114" style="transform:scaleX(0.9300);left:187.30px;top:459.66px;font-size:9.4px;color:#6a6a6a;">10</div>
<div class="a" style="left:220.10px;top:456.70px;width:44.60px;height:15.2px;border:1px solid #e4e4e4;border-radius:2.5px;background:#fff;overflow:hidden"></div>
<div class="t" id="x115" style="transform:scaleX(0.7813);left:223.70px;top:461.86px;font-size:8.1px;color:#777;font-family:'Liberation Mono',monospace;">526</div>
<div class="a" style="left:276.10px;top:456.70px;width:129.80px;height:15.2px;border:1px solid #e4e4e4;border-radius:2.5px;background:#fff;overflow:hidden"></div>
<div class="a" style="left:396.10px;top:457.70px;width:8.8px;height:13.2px;background:#f1f1f1"></div>
<svg class="a" style="left:398.20px;top:459.90px" width="4.6" height="9.4" viewBox="0 0 4.6 9.4"><path d="M0 2.8 L2.3 0.2 L4.6 2.8 Z" fill="#a8a8a8"/><path d="M0 6.6 L2.3 9.2 L4.6 6.6 Z" fill="#4a4a4a"/></svg>
<div class="t" id="x116" style="transform:scaleX(0.8062);left:279.70px;top:461.86px;font-size:8.1px;color:#777;font-family:'Liberation Mono',monospace;">select count(1) as counts fr</div>
<div class="a" style="left:417.30px;top:456.70px;width:77.70px;height:15.2px;border:1px solid #e4e4e4;border-radius:2.5px;background:#fff;overflow:hidden"></div>
<div class="t" id="x117" style="transform:scaleX(0.7882);left:420.90px;top:461.86px;font-size:8.1px;color:#777;font-family:'Liberation Mono',monospace;">6851</div>
<div class="a" style="left:506.40px;top:456.70px;width:93.60px;height:15.2px;border:1px solid #e4e4e4;border-radius:2.5px;background:#fff;overflow:hidden"></div>
<div class="t" id="x118" style="transform:scaleX(0.7923);left:510.00px;top:461.86px;font-size:8.1px;color:#777;font-family:'Liberation Mono',monospace;">admin</div>
<div class="a" style="left:611.40px;top:456.70px;width:105.50px;height:15.2px;border:1px solid #e4e4e4;border-radius:2.5px;background:#fff;overflow:hidden"></div>
<div class="t" id="x119" style="transform:scaleX(0.8047);left:615.00px;top:461.86px;font-size:8.1px;color:#777;font-family:'Liberation Mono',monospace;">2020-05-13 11:05:11</div>
<div class="a" style="left:728.30px;top:456.70px;width:44.40px;height:15.2px;border:1px solid #e4e4e4;border-radius:2.5px;background:#fff;overflow:hidden"></div>
<div class="t" id="x120" style="transform:scaleX(0.7264);left:731.90px;top:461.86px;font-size:8.1px;color:#777;font-family:'Liberation Mono',monospace;">1</div>
<div class="a" style="left:784.10px;top:456.70px;width:76.50px;height:15.2px;border:1px solid #e4e4e4;border-radius:2.5px;background:#fff;overflow:hidden"></div>
<div class="t" id="x121" style="transform:scaleX(0.7264);left:787.70px;top:461.86px;font-size:8.1px;color:#777;font-family:'Liberation Mono',monospace;">1</div>
<div class="t" id="x122" style="transform:scaleX(0.9300);left:187.30px;top:482.16px;font-size:9.4px;color:#6a6a6a;">11</div>
<div class="a" style="left:220.10px;top:479.20px;width:44.60px;height:15.2px;border:1px solid #e4e4e4;border-radius:2.5px;background:#fff;overflow:hidden"></div>
<div class="t" id="x123" style="transform:scaleX(0.7813);left:223.70px;top:484.36px;font-size:8.1px;color:#777;font-family:'Liberation Mono',monospace;">527</div>
<div class="a" style="left:276.10px;top:479.20px;width:129.80px;height:15.2px;border:1px solid #e4e4e4;border-radius:2.5px;background:#fff;overflow:hidden"></div>
<div class="a" style="left:396.10px;top:480.20px;width:8.8px;height:13.2px;background:#f1f1f1"></div>
<svg class="a" style="left:398.20px;top:482.40px" width="4.6" height="9.4" viewBox="0 0 4.6 9.4"><path d="M0 2.8 L2.3 0.2 L4.6 2.8 Z" fill="#a8a8a8"/><path d="M0 6.6 L2.3 9.2 L4.6 6.6 Z" fill="#4a4a4a"/></svg>
<div class="t" id="x124" style="transform:scaleX(0.8062);left:279.70px;top:484.36px;font-size:8.1px;color:#777;font-family:'Liberation Mono',monospace;">select * from zyplayer_data_</div>
<div class="a" style="left:417.30px;top:479.20px;width:77.70px;height:15.2px;border:1px solid #e4e4e4;border-radius:2.5px;background:#fff;overflow:hidden"></div>
<div class="t" id="x125" style="transform:scaleX(0.7882);left:420.90px;top:484.36px;font-size:8.1px;color:#777;font-family:'Liberation Mono',monospace;">6851</div>
<div class="a" style="left:506.40px;top:479.20px;width:93.60px;height:15.2px;border:1px solid #e4e4e4;border-radius:2.5px;background:#fff;overflow:hidden"></div>
<div class="t" id="x126" style="transform:scaleX(0.7923);left:510.00px;top:484.36px;font-size:8.1px;color:#777;font-family:'Liberation Mono',monospace;">admin</div>
<div class="a" style="left:611.40px;top:479.20px;width:105.50px;height:15.2px;border:1px solid #e4e4e4;border-radius:2.5px;background:#fff;overflow:hidden"></div>
<div class="t" id="x127" style="transform:scaleX(0.8047);left:615.00px;top:484.36px;font-size:8.1px;color:#777;font-family:'Liberation Mono',monospace;">2020-05-13 14:43:06</div>
<div class="a" style="left:728.30px;top:479.20px;width:44.40px;height:15.2px;border:1px solid #e4e4e4;border-radius:2.5px;background:#fff;overflow:hidden"></div>
<div class="t" id="x128" style="transform:scaleX(0.7264);left:731.90px;top:484.36px;font-size:8.1px;color:#777;font-family:'Liberation Mono',monospace;">1</div>
<div class="a" style="left:784.10px;top:479.20px;width:76.50px;height:15.2px;border:1px solid #e4e4e4;border-radius:2.5px;background:#fff;overflow:hidden"></div>
<div class="t" id="x129" style="transform:scaleX(0.7264);left:787.70px;top:484.36px;font-size:8.1px;color:#777;font-family:'Liberation Mono',monospace;">2</div>
<div class="t" id="x130" style="transform:scaleX(0.9300);left:187.30px;top:504.66px;font-size:9.4px;color:#6a6a6a;">12</div>
<div class="a" style="left:220.10px;top:501.70px;width:44.60px;height:15.2px;border:1px solid #e4e4e4;border-radius:2.5px;background:#fff;overflow:hidden"></div>
<div class="t" id="x131" style="transform:scaleX(0.7813);left:223.70px;top:506.86px;font-size:8.1px;color:#777;font-family:'Liberation Mono',monospace;">528</div>
<div class="a" style="left:276.10px;top:501.70px;width:129.80px;height:15.2px;border:1px solid #e4e4e4;border-radius:2.5px;background:#fff;overflow:hidden"></div>
<div class="a" style="left:396.10px;top:502.70px;width:8.8px;height:13.2px;background:#f1f1f1"></div>
<svg class="a" style="left:398.20px;top:504.90px" width="4.6" height="9.4" viewBox="0 0 4.6 9.4"><path d="M0 2.8 L2.3 0.2 L4.6 2.8 Z" fill="#a8a8a8"/><path d="M0 6.6 L2.3 9.2 L4.6 6.6 Z" fill="#4a4a4a"/></svg>
<div class="t" id="x132" style="transform:scaleX(0.8062);left:279.70px;top:506.86px;font-size:8.1px;color:#777;font-family:'Liberation Mono',monospace;">select count(1) as counts fr</div>
<div class="a" style="left:417.30px;top:501.70px;width:77.70px;height:15.2px;border:1px solid #e4e4e4;border-radius:2.5px;background:#fff;overflow:hidden"></div>
<div class="t" id="x133" style="transform:scaleX(0.7882);left:420.90px;top:506.86px;font-size:8.1px;color:#777;font-family:'Liberation Mono',monospace;">6851</div>
<div class="a" style="left:506.40px;top:501.70px;width:93.60px;height:15.2px;border:1px solid #e4e4e4;border-radius:2.5px;background:#fff;overflow:hidden"></div>
<div class="t" id="x134" style="transform:scaleX(0.7923);left:510.00px;top:506.86px;font-size:8.1px;color:#777;font-family:'Liberation Mono',monospace;">admin</div>
<div class="a" style="left:611.40px;top:501.70px;width:105.50px;height:15.2px;border:1px solid #e4e4e4;border-radius:2.5px;background:#fff;overflow:hidden"></div>
<div class="t" id="x135" style="transform:scaleX(0.8047);left:615.00px;top:506.86px;font-size:8.1px;color:#777;font-family:'Liberation Mono',monospace;">2020-05-13 14:43:06</div>
<div class="a" style="left:728.30px;top:501.70px;width:44.40px;height:15.2px;border:1px solid #e4e4e4;border-radius:2.5px;background:#fff;overflow:hidden"></div>
<div class="t" id="x136" style="transform:scaleX(0.7264);left:731.90px;top:506.86px;font-size:8.1px;color:#777;font-family:'Liberation Mono',monospace;">1</div>
<div class="a" style="left:784.10px;top:501.70px;width:76.50px;height:15.2px;border:1px solid #e4e4e4;border-radius:2.5px;background:#fff;overflow:hidden"></div>
<div class="t" id="x137" style="transform:scaleX(0.7264);left:787.70px;top:506.86px;font-size:8.1px;color:#777;font-family:'Liberation Mono',monospace;">2</div>
<div class="t" id="x138" style="transform:scaleX(0.9300);left:187.30px;top:527.16px;font-size:9.4px;color:#6a6a6a;">13</div>
<div class="a" style="left:220.10px;top:524.20px;width:44.60px;height:15.2px;border:1px solid #e4e4e4;border-radius:2.5px;background:#fff;overflow:hidden"></div>
<div class="t" id="x139" style="transform:scaleX(0.7813);left:223.70px;top:529.36px;font-size:8.1px;color:#777;font-family:'Liberation Mono',monospace;">529</div>
<div class="a" style="left:276.10px;top:524.20px;width:129.80px;height:15.2px;border:1px solid #e4e4e4;border-radius:2.5px;background:#fff;overflow:hidden"></div>
<div class="a" style="left:396.10px;top:525.20px;width:8.8px;height:13.2px;background:#f1f1f1"></div>
<svg class="a" style="left:398.20px;top:527.40px" width="4.6" height="9.4" viewBox="0 0 4.6 9.4"><path d="M0 2.8 L2.3 0.2 L4.6 2.8 Z" fill="#a8a8a8"/><path d="M0 6.6 L2.3 9.2 L4.6 6.6 Z" fill="#4a4a4a"/></svg>
<div class="t" id="x140" style="transform:scaleX(0.8062);left:279.70px;top:529.36px;font-size:8.1px;color:#777;font-family:'Liberation Mono',monospace;">select * from zyplayer_doc_m</div>
<div class="a" style="left:417.30px;top:524.20px;width:77.70px;height:15.2px;border:1px solid #e4e4e4;border-radius:2.5px;background:#fff;overflow:hidden"></div>
<div class="t" id="x141" style="transform:scaleX(0.7882);left:420.90px;top:529.36px;font-size:8.1px;color:#777;font-family:'Liberation Mono',monospace;">6851</div>
<div class="a" style="left:506.40px;top:524.20px;width:93.60px;height:15.2px;border:1px solid #e4e4e4;border-radius:2.5px;background:#fff;overflow:hidden"></div>
<div class="t" id="x142" style="transform:scaleX(0.7923);left:510.00px;top:529.36px;font-size:8.1px;color:#777;font-family:'Liberation Mono',monospace;">admin</div>
<div class="a" style="left:611.40px;top:524.20px;width:105.50px;height:15.2px;border:1px solid #e4e4e4;border-radius:2.5px;background:#fff;overflow:hidden"></div>
<div class="t" id="x143" style="transform:scaleX(0.8047);left:615.00px;top:529.36px;font-size:8.1px;color:#777;font-family:'Liberation Mono',monospace;">2020-05-13 14:43:06</div>
<div class="a" style="left:728.30px;top:524.20px;width:44.40px;height:15.2px;border:1px solid #e4e4e4;border-radius:2.5px;background:#fff;overflow:hidden"></div>
<div class="t" id="x144" style="transform:scaleX(0.7264);left:731.90px;top:529.36px;font-size:8.1px;color:#777;font-family:'Liberation Mono',monospace;">1</div>
<div class="a" style="left:784.10px;top:524.20px;width:76.50px;height:15.2px;border:1px solid #e4e4e4;border-radius:2.5px;background:#fff;overflow:hidden"></div>
<div class="t" id="x145" style="transform:scaleX(0.7264);left:787.70px;top:529.36px;font-size:8.1px;color:#777;font-family:'Liberation Mono',monospace;">2</div>
<div class="a" style="left:845px;top:450px;width:21.3px;height:45px;overflow:hidden"><svg class="a" style="left:0;top:0" width="45" height="45" viewBox="845 450 45 45"><circle cx="872" cy="473.3" r="14.6" fill="#fff" stroke="#a0a0a0" stroke-width="0.7"/><path d="M865.6 466.2 L866 468" stroke="#777" stroke-width="0.8"/><path d="M861.5 487.2 L865.5 485.2" stroke="#777" stroke-width="0.9"/></svg></div>
<div class="a" style="left:1049.6px;top:250.8px;width:8.5px;height:276.2px;background:#f1f1f1"></div>
<div class="a" style="left:1050.4px;top:260.5px;width:6.8px;height:148.7px;background:#c1c1c1"></div>
<svg class="a" style="left:1052px;top:254.6px" width="3.6" height="2.4" viewBox="0 0 4 3"><path d="M0 3 L2 0 L4 3 Z" fill="#a3a3a3"/></svg>
<div class="a" style="left:1070.5px;top:22px;width:9.5px;height:505px;background:#f1f1f1"></div>
<div class="a" style="left:1071.8px;top:32.1px;width:7px;height:385.9px;background:#c1c1c1"></div>
<svg class="a" style="left:1073px;top:26.2px" width="4.6" height="2.8" viewBox="0 0 4 3"><path d="M0 3 L2 0 L4 3 Z" fill="#8a8a8a"/></svg>
<svg class="a" style="left:1073px;top:520.4px" width="4.6" height="2.8" viewBox="0 0 4 3"><path d="M0 0 L2 3 L4 0 Z" fill="#505050"/></svg>
</body></html>
